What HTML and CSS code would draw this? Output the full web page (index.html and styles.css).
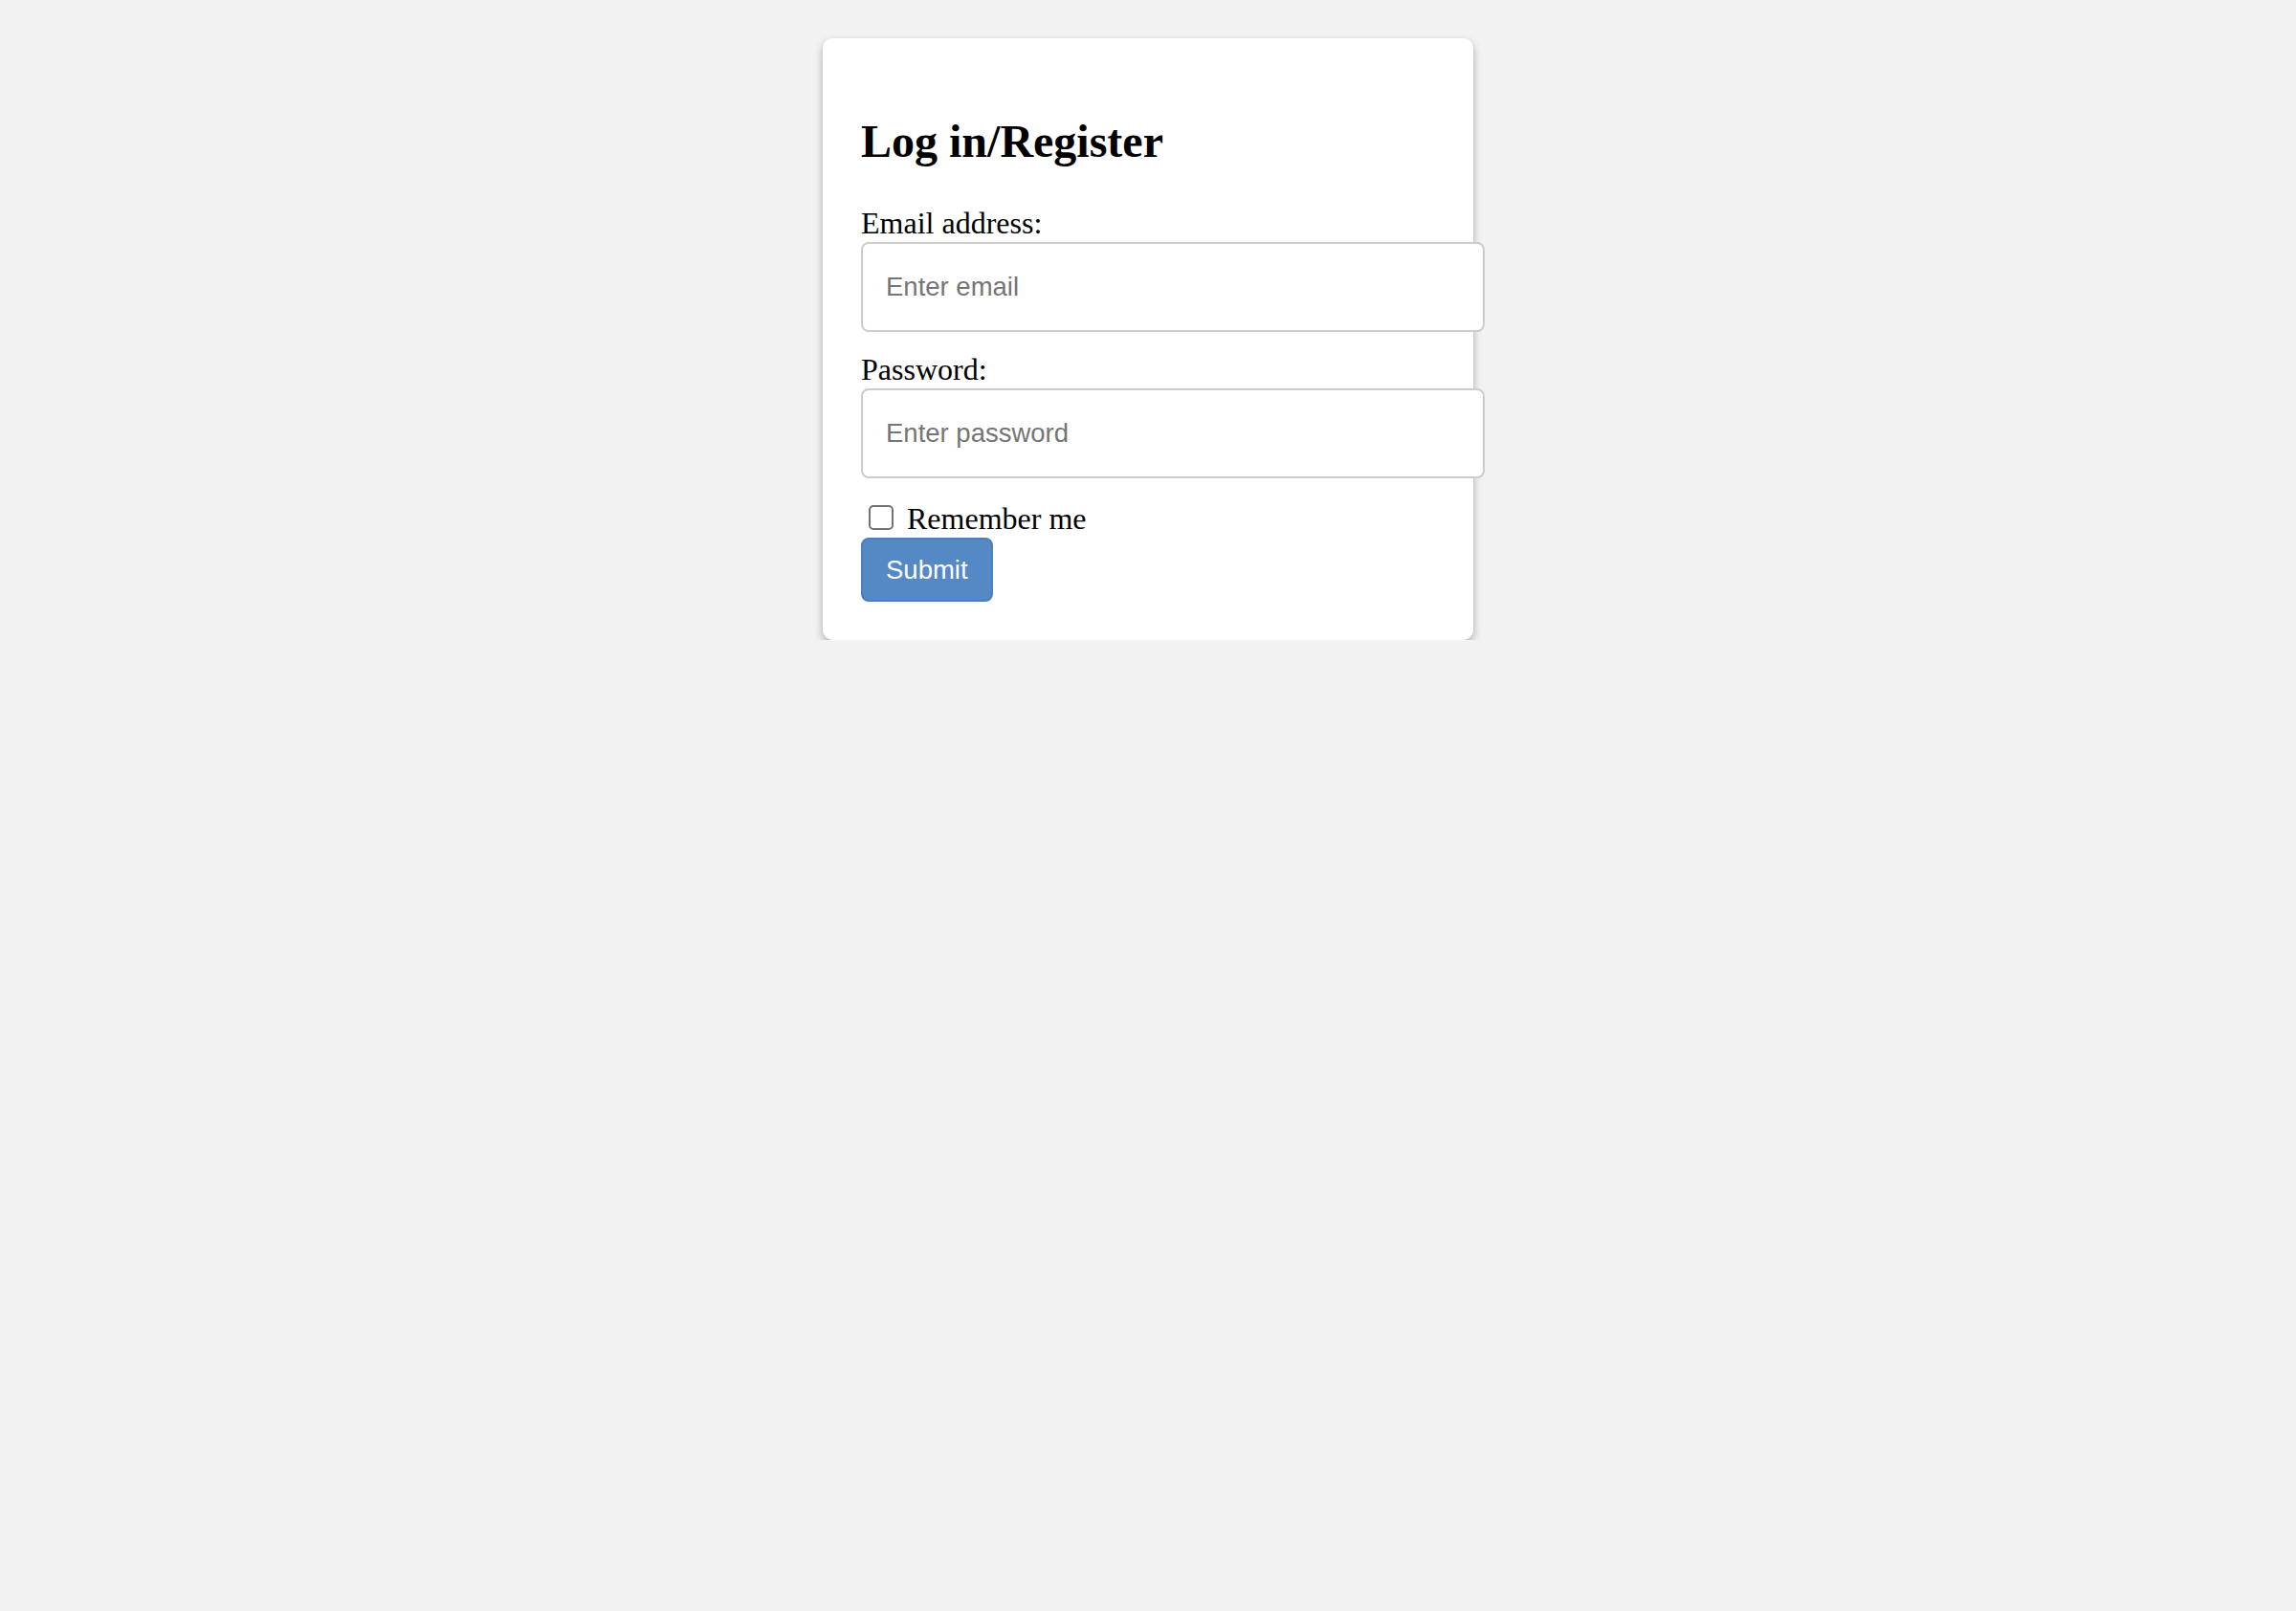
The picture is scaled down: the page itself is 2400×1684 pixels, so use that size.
FILE: index.html
```html
<!DOCTYPE html>
<html lang="en">
<head>
<meta charset="utf-8">
<title>Log in/Register</title>
<link rel="stylesheet" href="styles.css">
</head>
<body>
<div class="page">
  <div class="card">
    <h2 class="title">Log in/Register</h2>
    <form class="form">
      <label class="field-label" for="email">Email address:</label>
      <input class="field-input" type="email" id="email" placeholder="Enter email">
      <label class="field-label" for="pwd">Password:</label>
      <input class="field-input" type="password" id="pwd" placeholder="Enter password">
      <label class="check-row"><input class="check" type="checkbox"> Remember me</label>
      <button class="submit" type="submit">Submit</button>
    </form>
  </div>
</div>
</body>
</html>
```

FILE: styles.css
```css
html, body {
  margin: 0;
  padding: 0;
}

body {
  background: #f2f2f2;
  font-family: "Liberation Serif", "Times New Roman", serif;
  font-size: 32px;
  color: #000;
}

.page {
  display: flex;
  justify-content: center;
  padding-top: 40px;
}

.card {
  box-sizing: border-box;
  width: 680px;
  padding: 40px;
  background: #fff;
  border-radius: 10px;
  box-shadow: 0 4px 8px rgba(0, 0, 0, 0.3);
}

.title {
  margin: 40px 0;
  font-size: 48px;
  font-weight: bold;
  line-height: normal;
}

.form {
  margin: 0;
}

.field-label {
  display: block;
  line-height: normal;
}

.field-input {
  display: block;
  width: 100%;
  height: 90px;
  margin: 1px 0 21px;
  padding: 0 24px;
  border: 2px solid #cccccc;
  border-radius: 8px;
  background: #fff;
  font-family: "Liberation Sans", Arial, sans-serif;
  font-size: 27.5px;
  color: #000;
  outline: none;
}

.field-input::placeholder {
  color: #757575;
}

.check-row {
  display: block;
  padding-top: 3px;
  line-height: normal;
}

.check {
  -webkit-appearance: none;
  appearance: none;
  display: inline-block;
  box-sizing: border-box;
  width: 26px;
  height: 26px;
  margin: 0 6px 0 8px;
  border: 2px solid #727272;
  border-radius: 5px;
  background: #fff;
  vertical-align: -1px;
}

.submit {
  display: block;
  margin-top: 1px;
  height: 67px;
  padding: 0 24px;
  border: 2px solid #4b80be;
  border-radius: 8px;
  background: #5489c5;
  color: #fff;
  font-family: "Liberation Sans", Arial, sans-serif;
  font-size: 27.5px;
  line-height: 1;
}
```
